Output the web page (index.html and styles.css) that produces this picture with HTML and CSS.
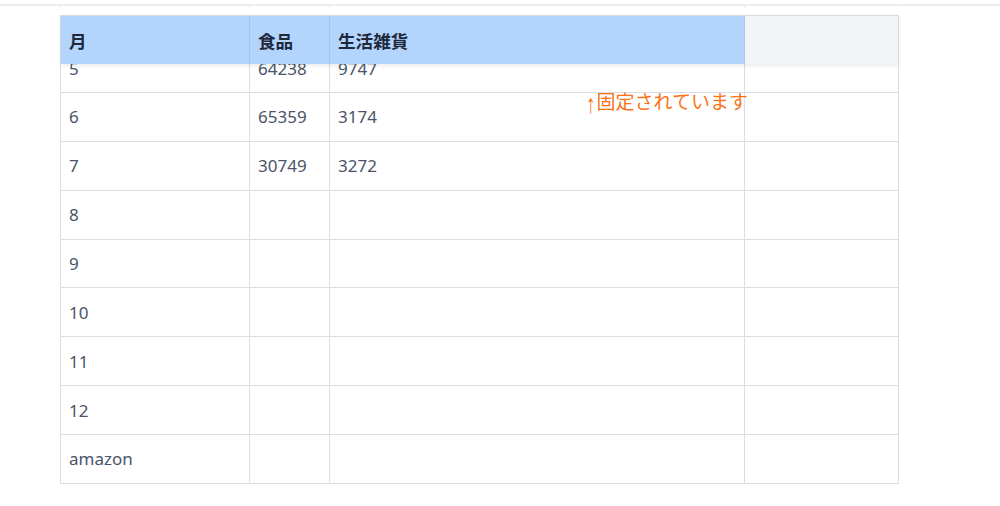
FILE: index.html
```html
<!DOCTYPE html>
<html lang="ja">
<head>
<meta charset="utf-8">
<title>固定ヘッダー表</title>
<link rel="stylesheet" href="styles.css">
</head>
<body>
<div class="topline"></div>
<div class="ticks">
  <span class="tick"></span><span class="tick"></span><span class="tick"></span><span class="tick"></span>
</div>
<div class="table">
  <div class="head">
    <div class="hcell">月</div>
    <div class="hcell">食品</div>
    <div class="hcell">生活雑貨</div>
    <div class="hcell hcell-empty"></div>
  </div>
  <div class="viewport">
    <div class="rows">
      <div class="row"><div class="cell">5</div><div class="cell">64238</div><div class="cell">9747</div><div class="cell"></div></div>
      <div class="row"><div class="cell">6</div><div class="cell">65359</div><div class="cell">3174</div><div class="cell"></div></div>
      <div class="row"><div class="cell">7</div><div class="cell">30749</div><div class="cell">3272</div><div class="cell"></div></div>
      <div class="row"><div class="cell">8</div><div class="cell"></div><div class="cell"></div><div class="cell"></div></div>
      <div class="row"><div class="cell">9</div><div class="cell"></div><div class="cell"></div><div class="cell"></div></div>
      <div class="row"><div class="cell">10</div><div class="cell"></div><div class="cell"></div><div class="cell"></div></div>
      <div class="row"><div class="cell">11</div><div class="cell"></div><div class="cell"></div><div class="cell"></div></div>
      <div class="row"><div class="cell">12</div><div class="cell"></div><div class="cell"></div><div class="cell"></div></div>
      <div class="row"><div class="cell">amazon</div><div class="cell"></div><div class="cell"></div><div class="cell"></div></div>
    </div>
  </div>
  <div class="note"><span class="arrow">↑</span>固定されています</div>
</div>
</body>
</html>
```

FILE: styles.css
```css
html, body {
  margin: 0;
  padding: 0;
  background: #ffffff;
}

body {
  font-family: "Noto Sans", "Noto Sans CJK JP", sans-serif;
  color: #4b5563;
}

.topline {
  margin-top: 4px;
  height: 2px;
  background: #ebebf1;
}

.ticks {
  display: grid;
  grid-template-columns: 189px 80px 415px 154px;
  width: 839px;
  margin-left: 60px;
  height: 2px;
  margin-bottom: 7px;
  box-sizing: border-box;
  border-left: 1px solid #ececf0;
}

.tick {
  border-right: 1px solid #ececf0;
}

.table {
  position: relative;
  width: 839px;
  margin-left: 60px;
  box-sizing: border-box;
  border-left: 1px solid #dcdee3;
}

.head {
  position: relative;
  z-index: 1;
  display: grid;
  grid-template-columns: 189px 80px 415px 154px;
  border-top: 1px solid #d9dadd;
  box-shadow: 0 2px 4px rgba(0, 0, 0, 0.08);
}

.hcell {
  box-sizing: border-box;
  height: 48px;
  display: flex;
  align-items: center;
  padding: 0 8px;
  background: #b3d4fc;
  border-right: 1px solid #a9c6ea;
  font-family: "Noto Sans CJK JP", sans-serif;
  font-weight: 700;
  font-size: 17.6px;
  color: #1e293b;
}

.hcell-empty {
  background: #f3f4f6;
  border-right: 1px solid #d6d7db;
}

.viewport {
  overflow: hidden;
}

.rows {
  margin-top: -19.86px;
}

.row {
  display: grid;
  grid-template-columns: 189px 80px 415px 154px;
  height: 48.86px;
  box-sizing: border-box;
  border-bottom: 1px solid #dcdee3;
}

.cell {
  box-sizing: border-box;
  display: flex;
  align-items: center;
  padding: 0 9px 0 8px;
  border-right: 1px solid #dcdee3;
  font-size: 17px;
  color: #4a5468;
}

.note {
  position: absolute;
  left: 525px;
  top: 76px;
  z-index: 2;
  line-height: 20px;
  font-family: "Noto Sans CJK JP", sans-serif;
  font-size: 19px;
  color: #f97316;
  white-space: nowrap;
}

.arrow {
  display: inline-block;
  font-family: "Liberation Sans", sans-serif;
  transform: scaleY(1.4) translateY(1px);
  margin-right: 1px;
}
```
